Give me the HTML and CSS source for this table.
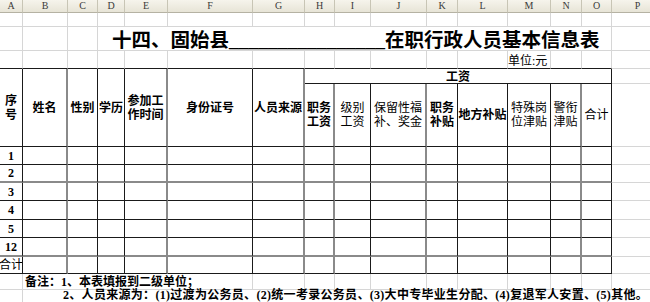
FILE: index.html
```html
<!DOCTYPE html>
<html lang="zh-CN">
<head>
<meta charset="utf-8">
<title>在职行政人员基本信息表</title>
<link rel="stylesheet" href="styles.css">
</head>
<body>
<div class="sheet">
  <div class="g cols">
    <div>A</div><div>B</div><div>C</div><div>D</div><div>E</div><div>F</div><div>G</div><div>H</div>
    <div>I</div><div>J</div><div>K</div><div>L</div><div>M</div><div>N</div><div>O</div><div>P</div>
  </div>

  <div class="g r1">
    <div></div><div></div><div></div><div></div><div></div><div></div><div></div><div></div>
    <div></div><div></div><div></div><div></div><div></div><div></div><div></div><div></div>
  </div>

  <div class="g rt">
    <div></div><div></div><div></div>
    <div class="title">十四、固始县<span class="us">________________</span>在职行政人员基本信息表</div>
    <div></div>
  </div>

  <div class="g r3">
    <div></div><div></div><div></div><div></div><div></div><div></div><div></div><div></div>
    <div></div><div></div><div></div><div></div><div class="unit">单位:元</div><div></div><div></div><div></div>
  </div>

  <div class="g head">
    <div class="hc h2">序<br>号</div>
    <div class="hc h2 sv">姓名</div>
    <div class="hc h2">性别</div>
    <div class="hc h2">学历</div>
    <div class="hc h2 sv">参加工<br>作时间</div>
    <div class="hc h2">身份证号</div>
    <div class="hc h2 sv">人员来源</div>
    <div class="hc wage">工资</div>
    <div class="pc"></div>
    <div class="hc sv">职务<br>工资</div>
    <div class="hc nw">级别<br>工资</div>
    <div class="hc sv nw">保留性福<br>补、奖金</div>
    <div class="hc">职务<br>补贴</div>
    <div class="hc">地方补贴</div>
    <div class="hc nw">特殊岗<br>位津贴</div>
    <div class="hc sv nw">警衔<br>津贴</div>
    <div class="hc nw">合计</div>
    <div class="pc"></div>
  </div>

  <div class="g d">
    <div class="n">1</div><div></div><div></div><div></div><div></div><div></div><div></div><div></div>
    <div></div><div></div><div></div><div></div><div></div><div></div><div></div><div></div>
  </div>
  <div class="g d soft">
    <div class="n">2</div><div></div><div></div><div></div><div></div><div></div><div></div><div></div>
    <div></div><div></div><div></div><div></div><div></div><div></div><div></div><div></div>
  </div>
  <div class="g d">
    <div class="n">3</div><div></div><div></div><div></div><div></div><div></div><div></div><div></div>
    <div></div><div></div><div></div><div></div><div></div><div></div><div></div><div></div>
  </div>
  <div class="g d tall">
    <div class="n">4</div><div></div><div></div><div></div><div></div><div></div><div></div><div></div>
    <div></div><div></div><div></div><div></div><div></div><div></div><div></div><div></div>
  </div>
  <div class="g d">
    <div class="n">5</div><div></div><div></div><div></div><div></div><div></div><div></div><div></div>
    <div></div><div></div><div></div><div></div><div></div><div></div><div></div><div></div>
  </div>
  <div class="g d tall soft">
    <div class="n">12</div><div></div><div></div><div></div><div></div><div></div><div></div><div></div>
    <div></div><div></div><div></div><div></div><div></div><div></div><div></div><div></div>
  </div>
  <div class="g d sum">
    <div class="s">合计</div><div></div><div></div><div></div><div></div><div></div><div></div><div></div>
    <div></div><div></div><div></div><div></div><div></div><div></div><div></div><div></div>
  </div>

  <div class="g f1">
    <div></div>
    <div class="note n1">备注：1、本表填报到二级单位；</div>
    <div></div><div></div><div></div><div></div><div></div><div></div><div></div><div></div><div></div><div></div>
  </div>
  <div class="g f2">
    <div></div>
    <div class="note n2">2、人员来源为：(1)过渡为公务员、(2)统一考录公务员、(3)大中专毕业生分配、(4)复退军人安置、(5)其他。</div>
  </div>
</div>
</body>
</html>
```

FILE: styles.css
```css
html, body {
  margin: 0;
  padding: 0;
  background: #ffffff;
  overflow: hidden;
}

body {
  font-family: "Liberation Serif", "Noto Sans CJK SC", sans-serif;
  font-size: 12px;
  color: #000;
}

.sheet {
  width: 664px;
}

.g {
  display: grid;
  grid-template-columns: 23px 45px 30px 27px 43px 85px 52px 30px 36px 56px 31px 50px 43px 31px 30px 52px;
}

.g > * {
  box-sizing: border-box;
  min-width: 0;
  border-right: 1px solid #d6d6d6;
  border-bottom: 1px solid #d6d6d6;
}

/* column letters */
.cols {
  grid-auto-rows: 13px;
  background: linear-gradient(#f6f4ec, #e6e3d5);
}
.cols > * {
  border-right: 1px solid #c8c5b5;
  border-bottom: 1px solid #b5b2a3;
  display: flex;
  align-items: center;
  justify-content: center;
  font-family: "Liberation Serif", serif;
  font-size: 10px;
  line-height: 10px;
  color: #3a3a3a;
}

.r1 { grid-auto-rows: 14px; }

.rt { grid-auto-rows: 24px; }

.title {
  grid-column: 4 / 16;
  display: flex;
  align-items: center;
  padding: 4px 0 0 14px;
  font-size: 19.5px;
  line-height: 20px;
  font-weight: bold;
  white-space: nowrap;
}

.us {
  font-weight: bold;
}

.r3 { grid-auto-rows: 18px; }
.r3 > :not(:last-child) {
  border-bottom-color: #1a1a1a;
}

.unit {
  display: flex;
  align-items: flex-end;
  font-size: 12px;
  line-height: 13px;
  white-space: nowrap;
  overflow: visible;
}

/* header block */
.head {
  grid-template-rows: 15px 63px;
}

.hc {
  border-right: 1px solid #1a1a1a;
  border-bottom: 1px solid #1a1a1a;
  display: flex;
  align-items: center;
  justify-content: center;
  text-align: center;
  font-weight: bold;
  font-size: 12px;
  line-height: 14px;
  white-space: nowrap;
  overflow: hidden;
}

.h2 { grid-row: 1 / 3; }

.wage {
  grid-column: 8 / 16;
  padding-top: 1px;
}

.hc.sv { border-right: 2px solid #8a8a8a; }
.hc.nw { font-weight: normal; }

.pc {
  border-right: 1px solid #d6d6d6;
  border-bottom: 1px solid #d6d6d6;
}

/* data rows */
.d { grid-auto-rows: 18px; }
.d.tall { grid-auto-rows: 19px; }
.d.sum { grid-auto-rows: 17px; }

.g.d > * {
  border-right: 1px solid #1a1a1a;
  border-bottom: 1px solid #1a1a1a;
}

.g.d > :nth-child(2),
.g.d > :nth-child(5),
.g.d > :nth-child(7),
.g.d > :nth-child(8),
.g.d > :nth-child(10),
.g.d > :nth-child(14) {
  border-right: 2px solid #8a8a8a;
}

.g.d.soft > :not(:last-child) {
  border-bottom: 2px solid #8a8a8a;
}

.g.d > :last-child {
  border-right: 1px solid #d6d6d6;
  border-bottom: 1px solid #d6d6d6;
}

.n {
  display: flex;
  align-items: center;
  justify-content: center;
  font-weight: bold;
  font-size: 12px;
  line-height: 12px;
}

.s {
  display: flex;
  align-items: center;
  justify-content: center;
  font-size: 12px;
  line-height: 13px;
  white-space: nowrap;
  overflow: hidden;
}

/* footnotes */
.f1 { grid-auto-rows: 16px; }
.f2 { grid-auto-rows: 20px; }

.note {
  font-weight: bold;
  font-size: 12px;
  line-height: 12px;
  white-space: nowrap;
  overflow: visible;
}

.n1 {
  grid-column: 2 / 7;
  display: flex;
  align-items: center;
  padding-left: 2px;
}

.n2 {
  grid-column: 2 / 17;
  padding: 0 0 0 40px;
  line-height: 10px;
  letter-spacing: 0.3px;
  border-right: 0;
}
```
